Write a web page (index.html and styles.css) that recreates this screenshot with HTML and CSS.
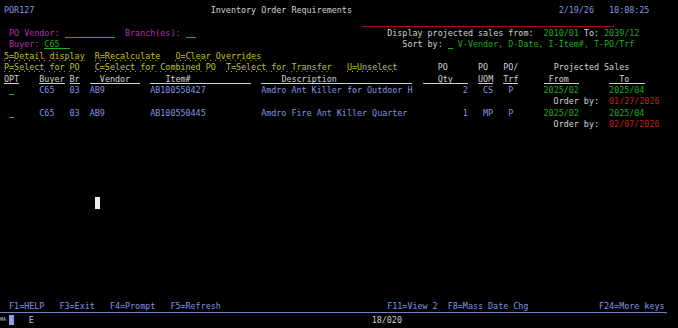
FILE: index.html
```html
<!DOCTYPE html>
<html lang="en">
<head>
    <meta charset="UTF-8">
    <title>POR127 - Inventory Order Requirements</title>
    <link rel="stylesheet" href="styles.css">
</head>
<body>
    <div class="screen">
<div class="row"><span class="blue">POR127</span>                                   Inventory Order Requirements                                         <span class="blue">2/19/26   10:08:25</span></div>
<div class="row">                                                                       <span class="redline ul">                                                  </span></div>
<div class="row"> <span class="mag">PO Vendor:</span> <span class="green ul">          </span>  <span class="mag">Branch(es):</span> <span class="green ul">  </span>                                      Display projected sales from:  <span class="green">2010/01</span> To: <span class="green">2039/12</span></div>
<div class="row"> <span class="mag">Buyer:</span> <span class="green ul">C65  </span>                                                                  Sort by: <span class="green ul"> </span> <span class="green">V-Vendor, D-Date, I-Item#, T-PO/Trf</span></div>
<div class="row"><span class="yel dots">5=Detail display</span>  <span class="yel dots">R=Recalculate</span>   <span class="yel dots">O=Clear Overrides</span></div>
<div class="row"><span class="yel dots">P=Select for PO</span>   <span class="yel dots">C=Select for Combined PO</span>  <span class="yel dots">T=Select for Transfer</span>   <span class="yel dots">U=Unselect</span>        PO      PO   PO/       Projected Sales</div>
<div class="row"><span class="ul">OPT</span>    <span class="ul">Buyer</span> <span class="ul">Br</span>  <span class="ul">  Vendor  </span>  <span class="ul">   Item#            </span>  <span class="ul">    Description               </span>  <span class="ul">   Qty   </span>  <span class="ul">UOM</span>  <span class="ul">Trf</span>     <span class="ul"> From  </span>      <span class="ul">  To   </span></div>
<div class="row"> <span class="green ul"> </span>     <span class="blue">C65   03  AB9         AB100550427           Amdro Ant Killer for Outdoor H          2   CS   P</span>      <span class="green">2025/02</span>      <span class="green">2025/04</span></div>
<div class="row">                                                                                                             Order by:  <span class="red">01/27/2026</span></div>
<div class="row"> <span class="green ul"> </span>     <span class="blue">C65   03  AB9         AB100550445           Amdro Fire Ant Killer Quarter           1   MP   P</span>      <span class="green">2025/02</span>      <span class="green">2025/04</span></div>
<div class="row">                                                                                                             Order by:  <span class="red">02/07/2026</span></div>
<div class="row"></div>
<div class="row"></div>
<div class="row"></div>
<div class="row"></div>
<div class="row"></div>
<div class="row"></div>
<div class="row">                  <span class="cursor"></span></div>
<div class="row"></div>
<div class="row"></div>
<div class="row"></div>
<div class="row"></div>
<div class="row"></div>
<div class="row"></div>
<div class="row"></div>
<div class="row"></div>
<div class="row"> <span class="blue">F1=HELP   F3=Exit   F4=Prompt   F5=Refresh                                 F11=View 2  F8=Mass Date Chg              F24=More keys</span></div>
    </div>
    <div class="status"><span class="ma">MA</span><span class="lock"></span>   <span class="oia">E</span>                                                                   <span class="pos">18/020</span></div>
</body>
</html>
```

FILE: styles.css
```css
html, body {
    margin: 0;
    width: 678px;
    height: 328px;
    overflow: hidden;
    background-color: #000;
}
.screen {
    padding: 5.3px 0 0 4px;
    font-family: "DejaVu Sans Mono", monospace;
    font-size: 8.4px;
    color: #d2d2d2;
}
.row {
    height: 11.4px;
    line-height: 11.4px;
    white-space: pre;
}
.blue {
    color: #8494e0;
}
.green {
    color: #1cae1c;
}
.mag {
    color: #b42cb4;
}
.yel {
    color: #c2c21c;
}
.red {
    color: #c81c1c;
}
.redline {
    color: #a01212;
}
/* underlined field, drawn under blanks too */
.ul {
    background: linear-gradient(currentColor, currentColor) left bottom / 100% 1px no-repeat;
}
/* column separator dots */
.dots {
    background-image: linear-gradient(to right, currentColor 1px, transparent 1px);
    background-size: 1ch 1px;
    background-position: left bottom;
    background-repeat: repeat-x;
}
.cursor {
    display: inline-block;
    width: 1ch;
    height: 12px;
    margin-top: -2px;
    vertical-align: top;
    background-color: #ececec;
}
.status {
    width: 667px;
    height: 15px;
    margin-top: -1px;
    border-top: 1px solid #6f7fd0;
    font-family: "DejaVu Sans Mono", monospace;
    font-size: 8.4px;
    line-height: 14px;
    white-space: pre;
    color: #c8c8c8;
}
.ma {
    display: inline-block;
    width: 8.7px;
    font-size: 5px;
    vertical-align: top;
    line-height: 12px;
    color: #c8c8d8;
}
.lock {
    display: inline-block;
    width: 5px;
    height: 10px;
    margin-top: 2px;
    vertical-align: top;
    background-color: #8c9ce8;
}
.oia {
    color: #b8c0e0;
}
.pos {
    color: #cfcfcf;
}
```
